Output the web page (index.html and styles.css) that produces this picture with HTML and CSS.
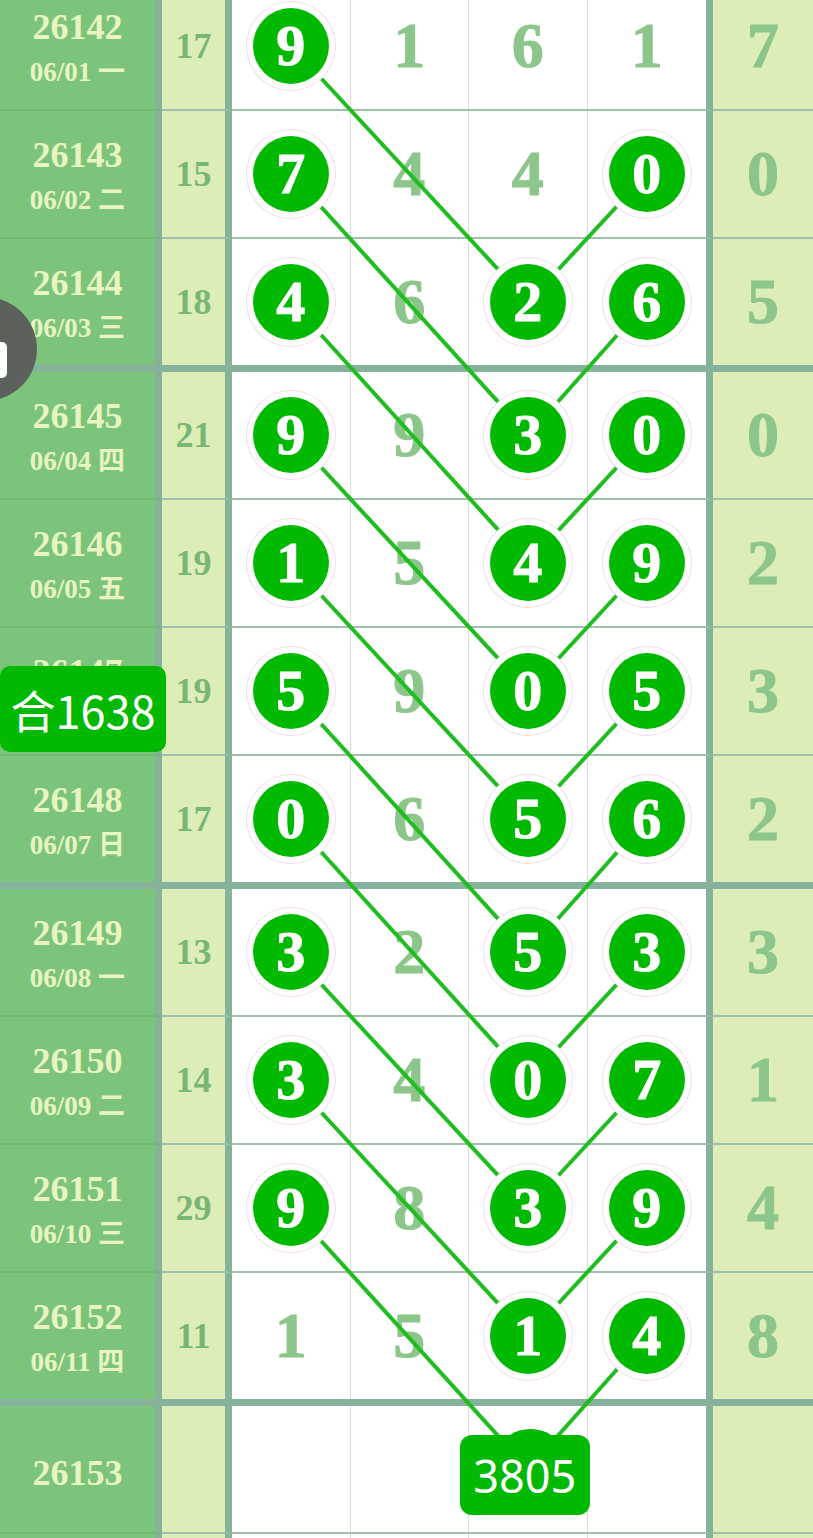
FILE: index.html
```html
<!DOCTYPE html>
<html lang="zh">
<head>
    <meta charset="UTF-8">
    <meta name="viewport" content="width=device-width, initial-scale=1.0">
    <title>走势图</title>
    <link rel="stylesheet" href="styles.css">
</head>
<body>
<div class="chart" id="chart">
    <svg class="links" id="links" xmlns="http://www.w3.org/2000/svg"></svg>
</div>

<div class="float-btn"></div>
<div class="sum-tag">合1638</div>

<script>
    const rows = [
        {no: '26142', date: '06/01 一', sum: 17, d: [9, 1, 6, 1], balls: [0], tail: 7},
        {no: '26143', date: '06/02 二', sum: 15, d: [7, 4, 4, 0], balls: [0, 3], tail: 0},
        {no: '26144', date: '06/03 三', sum: 18, d: [4, 6, 2, 6], balls: [0, 2, 3], tail: 5},
        {no: '26145', date: '06/04 四', sum: 21, d: [9, 9, 3, 0], balls: [0, 2, 3], tail: 0},
        {no: '26146', date: '06/05 五', sum: 19, d: [1, 5, 4, 9], balls: [0, 2, 3], tail: 2},
        {no: '26147', date: '06/06 六', sum: 19, d: [5, 9, 0, 5], balls: [0, 2, 3], tail: 3},
        {no: '26148', date: '06/07 日', sum: 17, d: [0, 6, 5, 6], balls: [0, 2, 3], tail: 2},
        {no: '26149', date: '06/08 一', sum: 13, d: [3, 2, 5, 3], balls: [0, 2, 3], tail: 3},
        {no: '26150', date: '06/09 二', sum: 14, d: [3, 4, 0, 7], balls: [0, 2, 3], tail: 1},
        {no: '26151', date: '06/10 三', sum: 29, d: [9, 8, 3, 9], balls: [0, 2, 3], tail: 4},
        {no: '26152', date: '06/11 四', sum: 11, d: [1, 5, 1, 4], balls: [2, 3], tail: 8},
        {no: '26153', date: '', sum: '', d: ['', '', '', ''], balls: [], tail: '', next: '3805'},
        {no: '', date: '', sum: '', d: ['', '', '', ''], balls: [], tail: ''}
    ];

    const chart = document.getElementById("chart");
    let html = '';

    rows.forEach(r => {
        const week = r.no && (Number(r.no) - 26140) % 4 === 0;
        let cells = '';
        r.d.forEach((v, c) => {
            let inner = v;
            if (r.balls.includes(c)) inner = '<span class="ball">' + v + '</span>';
            if (r.next && c === 2) inner = '<span class="next">' + r.next + '</span>';
            cells += '<div class="cell">' + inner + '</div>';
        });
        html += '<div class="row' + (week ? ' week' : '') + '">' +
            '<div class="issue"><b>' + r.no + '</b>' + (r.date ? '<span>' + r.date + '</span>' : '') + '</div>' +
            '<div class="sum">' + r.sum + '</div>' +
            '<div class="digits">' + cells + '</div>' +
            '<div class="tail">' + r.tail + '</div>' +
            '</div>';
    });

    chart.insertAdjacentHTML("beforeend", html);

    // lines between balls: col 1 goes two rows down to col 3, col 4 goes one row down to col 3
    function drawLinks() {
        const svg = document.getElementById("links");
        const box = chart.getBoundingClientRect();
        const grid = [...chart.querySelectorAll(".row")].map(row => [...row.querySelectorAll(".cell")]);
        svg.setAttribute("height", box.height);

        function center(el) {
            const b = el.getBoundingClientRect();
            return [b.left + b.width / 2 - box.left, b.top + b.height / 2 - box.top];
        }

        let lines = '';
        rows.forEach((r, i) => {
            const pairs = [];
            if (r.balls.includes(0)) pairs.push([0, i + 2]);
            if (r.balls.includes(3)) pairs.push([3, i + 1]);
            pairs.forEach(p => {
                const a = center(grid[i][p[0]]);
                const b = center(grid[p[1]][2]);
                lines += '<line x1="' + a[0] + '" y1="' + a[1] + '" x2="' + b[0] + '" y2="' + b[1] + '"/>';
            });
        });
        svg.innerHTML = lines;
    }

    drawLinks();
</script>
</body>
</html>
```

FILE: styles.css
```css
* {
    box-sizing: border-box;
}

body {
    margin: 0;
    font-family: "Liberation Serif", "Noto Sans CJK SC", serif;
    background-color: #fff;
    overflow: hidden;
}

.chart {
    position: relative;
    width: 813px;
    margin-top: -17px;
}

.links {
    position: absolute;
    left: 0;
    top: 0;
    width: 813px;
    z-index: 1;
    pointer-events: none;
    stroke: #1fbd1f;
    stroke-width: 4;
}

.row {
    display: grid;
    grid-template-columns: 162px 70px 481px 100px;
    height: 128px;
}

.row > div {
    border-bottom: 2px solid #a0c0aa;
}

.row > .issue {
    border-bottom-color: #72b874;
}

.row.week {
    height: 133px;
}

.row.week > div {
    border-bottom: 7px solid #86b19a;
}

.issue {
    display: flex;
    flex-direction: column;
    align-items: center;
    justify-content: center;
    padding-top: 7px;
    background-color: #7cc47b;
    border-right: 7px solid #86b19a;
    color: #e8f5c0;
    font-weight: bold;
}

.issue b {
    font-size: 36px;
    line-height: 44px;
}

.issue span {
    font-size: 27px;
    line-height: 46px;
}

.sum {
    display: flex;
    align-items: center;
    justify-content: center;
    background-color: #ddedb7;
    border-right: 7px solid #86b19a;
    color: #78b678;
    font-size: 36px;
    font-weight: bold;
}

.digits {
    display: grid;
    grid-template-columns: repeat(4, minmax(0, 1fr));
    background-color: #fff;
    border-right: 7px solid #86b19a;
}

.cell {
    display: flex;
    align-items: center;
    justify-content: center;
    border-right: 1px solid #d9dfdc;
    color: #8cc68a;
    font-size: 64px;
    font-weight: bold;
    -webkit-text-stroke: 1px #8cc68a;
}

.cell:last-child {
    border-right: none;
}

.ball {
    position: relative;
    z-index: 2;
    display: flex;
    align-items: center;
    justify-content: center;
    width: 76px;
    height: 76px;
    border-radius: 50%;
    background-color: #00b900;
    box-shadow: 0 0 0 6px #fff, 0 0 0 7px #f4dcef;
    color: #fff;
    font-size: 58px;
    line-height: 1;
    -webkit-text-stroke: 1px #fff;
}

.next {
    position: relative;
    z-index: 3;
    flex: none;
    display: flex;
    align-items: center;
    justify-content: center;
    width: 130px;
    height: 80px;
    margin: 12px 0 0 -6px;
    border-radius: 12px;
    background-color: #00b900;
    color: #fff;
    font-family: "Noto Sans", sans-serif;
    font-size: 45px;
    font-weight: normal;
    -webkit-text-stroke: 0;
}

.next::before {
    content: "";
    position: absolute;
    left: 42px;
    top: -6px;
    width: 57px;
    height: 40px;
    border-radius: 50%;
    background-color: #00b900;
    z-index: -1;
}

.tail {
    display: flex;
    align-items: center;
    justify-content: center;
    background-color: #ddedb7;
    color: #8cc68a;
    font-size: 64px;
    font-weight: bold;
    -webkit-text-stroke: 1px #8cc68a;
}

/* floating things over the table */
.float-btn {
    position: absolute;
    left: -67px;
    top: 297px;
    width: 104px;
    height: 104px;
    border-radius: 50%;
    background-color: #5c615c;
    z-index: 5;
}

.float-btn::after {
    content: "";
    position: absolute;
    left: 50px;
    top: 45px;
    width: 24px;
    height: 36px;
    border-radius: 5px;
    background-color: #fff;
}

.sum-tag {
    position: absolute;
    left: 0;
    top: 666px;
    width: 166px;
    height: 86px;
    display: flex;
    align-items: center;
    justify-content: center;
    border-radius: 10px;
    background-color: #00b900;
    color: #fff;
    font-family: "Noto Sans CJK SC", "Noto Sans", sans-serif;
    font-size: 45px;
    z-index: 5;
}
```
